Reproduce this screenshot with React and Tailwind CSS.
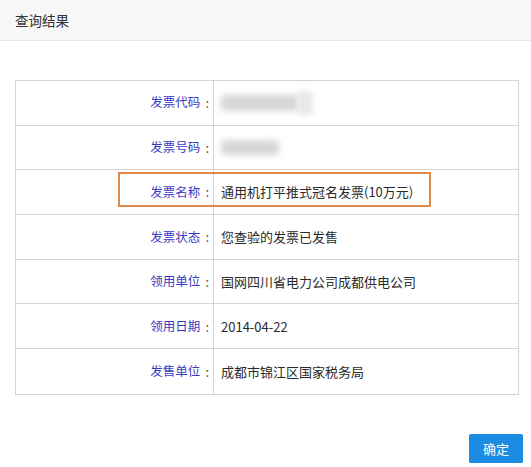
import React from "react";

const rows = [
  { label: "发票代码", blur: "code" },
  { label: "发票号码", blur: "number" },
  { label: "发票名称", value: "通用机打平推式冠名发票(10万元)", mark: true },
  { label: "发票状态", value: "您查验的发票已发售" },
  { label: "领用单位", value: "国网四川省电力公司成都供电公司" },
  { label: "领用日期", value: "2014-04-22" },
  { label: "发售单位", value: "成都市锦江区国家税务局" },
];

const App = () => {
  return (
    <div
      className="w-[531px] h-[467px] bg-white overflow-hidden text-[#333]"
      style={{ fontFamily: '"Noto Sans CJK SC", "Noto Sans", sans-serif' }}
    >
      {/* Title bar */}
      <div className="h-[41px] bg-[#f7f7f7] border-b border-[#e8e8e8] flex items-center px-[15px] text-[13.5px] text-[#333]">
        查询结果
      </div>

      {/* Result table */}
      <div className="mt-[39px] ml-[15px] w-[504px] border border-[#d4d4d4]">
        {rows.map((row, i) => (
          <div
            key={i}
            className={`relative flex h-[44.7px] ${i < rows.length - 1 ? "border-b border-[#d4d4d4]" : ""}`}
          >
            <div className="w-[198px] border-r border-[#d4d4d4] flex items-center justify-end pr-[4px] text-[12.5px] text-[#3a3ac4]">
              <span>{row.label}</span>
              <span className="ml-[5px] text-[13px] text-[#555]">:</span>
            </div>
            <div className="flex-1 flex items-center pl-[7px] text-[13px] text-[#2a2a2a]">
              {row.blur === "code" && (
                <div className="flex items-center">
                  <div className="w-[78px] h-[16px] bg-[#d6d6d6] blur-[3px] rounded-sm" />
                  <div className="w-[16px] h-[24px] bg-[#e8e8e8] blur-[3px] -ml-[2px]" />
                </div>
              )}
              {row.blur === "number" && (
                <div className="w-[58px] h-[15px] bg-[#d6d6d6] blur-[3px] rounded-sm" />
              )}
              {row.value}
            </div>
            {row.mark && (
              <div className="absolute left-[102px] top-[2px] w-[313px] h-[35px] border-2 border-[#e0894a]" />
            )}
          </div>
        ))}
      </div>

      {/* Footer */}
      <div className="flex justify-end pr-[8px] mt-[39px]">
        <button className="w-[54px] h-[29px] bg-[#1a8ce2] text-white text-[13px] rounded-[2px] flex items-center justify-center">
          确定
        </button>
      </div>
    </div>
  );
};

export default App;
